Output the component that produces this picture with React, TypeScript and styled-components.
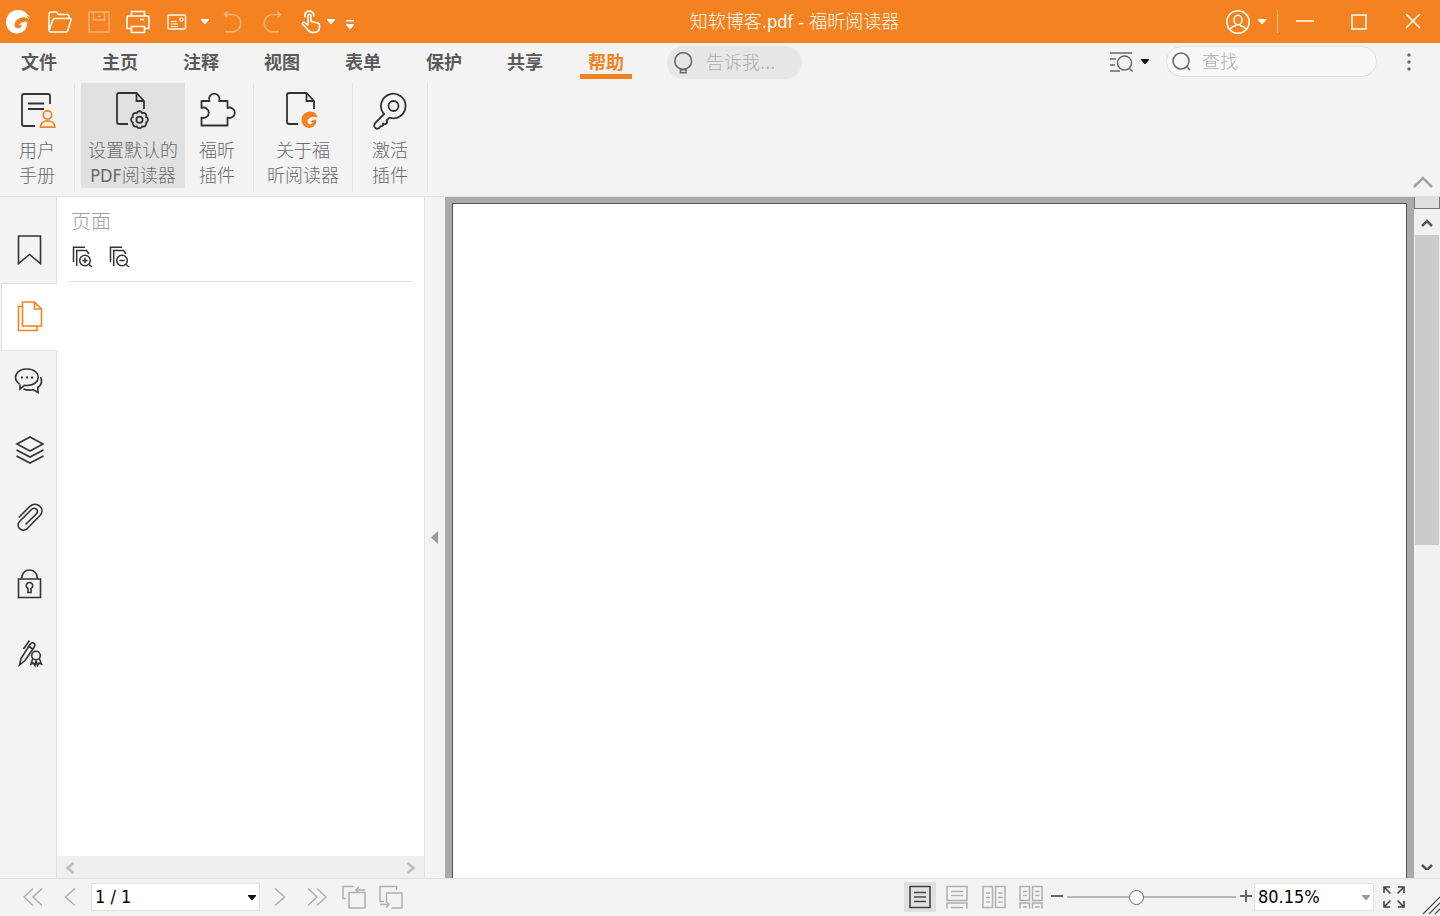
import React from "react";
import styled, { createGlobalStyle, css } from "styled-components";

const orange = "#f58220";
const fontStack =
  '"DejaVu Sans Condensed", "Noto Sans CJK SC", "Noto Sans", sans-serif';

const GlobalStyle = createGlobalStyle`
  *, *::before, *::after { box-sizing: border-box; }
  body {
    margin: 0;
    font-family: ${fontStack};
    font-size: 18px;
    font-weight: 300;
    color: #6a6a6a;
    background: #f3f3f3;
  }
  button, input, select { font: inherit; color: inherit; }
  svg { display: block; flex: none; }
`;

/* ---------- shared pieces ---------- */

const Window = styled.div`
  display: flex;
  flex-direction: column;
  height: 100vh;
  overflow: hidden;
`;

const PlainButton = styled.button`
  display: flex;
  align-items: center;
  justify-content: center;
  padding: 0;
  border: 0;
  background: transparent;
  cursor: pointer;
`;

type GlyphProps = {
  w: number;
  h: number;
  stroke?: number;
  children: React.ReactNode;
};

const Glyph = ({ w, h, stroke = 1.5, children }: GlyphProps) => (
  <svg
    width={w}
    height={h}
    viewBox={`0 0 ${w} ${h}`}
    fill="none"
    stroke="currentColor"
    strokeWidth={stroke}
    aria-hidden="true"
  >
    {children}
  </svg>
);

const Caret = ({ w = 8, h = 5 }: { w?: number; h?: number }) => (
  <svg width={w} height={h} viewBox="0 0 8 5" fill="currentColor" aria-hidden="true">
    <path d="M0 0H8V1L4.5 5H3.5L0 1Z" />
  </svg>
);

const FoxMark = () => (
  <path
    d="M21 3.500C18.500 1 15.500 0 12 0C5 0 0 5.500 0 12.200C0 18.800 5 23.500 10.800 23.500C17.500 23.500 21.600 18.500 21.200 11.500C18 11.500 14.500 12.600 12.800 15.200L16 15C15.300 17.200 13.800 18.300 11.800 18.300C9.200 18.300 8 16 8.800 13.200C10 9.200 14.500 7 19 7.400C20.800 7.600 22.200 8.600 23 10C22.800 8 21.600 6.400 19.500 5.600C21.300 5.600 22.800 6.400 23.800 7.600C23.400 5.800 22 4.400 19.500 3.800Z"
    fill="currentColor"
    stroke="none"
  />
);

/* ---------- title bar ---------- */

const TitleBar = styled.header`
  display: flex;
  align-items: center;
  flex: none;
  height: 43px;
  background: ${orange};
  color: #fff;
`;

const BarButton = styled(PlainButton)<{ $width: number; $dim?: boolean }>`
  width: ${(p) => p.$width}px;
  height: 42px;
  opacity: ${(p) => (p.$dim ? 0.4 : 1)};
`;

const DocTitle = styled.h1`
  flex: 1;
  margin: 0;
  font-size: 18px;
  font-weight: 300;
  line-height: 42px;
  text-align: center;
  white-space: nowrap;
`;

const BarDivider = styled.span`
  width: 1px;
  height: 23px;
  margin-left: 3px;
  background: #fbc08c;
`;

/* ---------- ribbon tabs ---------- */

const TabRow = styled.div`
  display: flex;
  align-items: flex-start;
  flex: none;
  height: 40px;
  padding: 3px 0 0 13px;
`;

const Tabs = styled.nav`
  display: flex;
  gap: 29px;
`;

const Tab = styled.a<{ $active?: boolean }>`
  width: 52px;
  height: 33px;
  padding-top: 4px;
  border-bottom: 5px solid ${(p) => (p.$active ? orange : "transparent")};
  color: ${(p) => (p.$active ? orange : "#5a5a5a")};
  font-weight: 700;
  line-height: 26px;
  text-align: center;
  text-decoration: none;
`;

const TellMe = styled.label`
  display: flex;
  align-items: center;
  gap: 13px;
  width: 135px;
  height: 33px;
  margin-left: 35px;
  padding-left: 7px;
  border-radius: 17px;
  background: #e7e7e7;
`;

const BareInput = styled.input`
  flex: 1;
  min-width: 0;
  height: 28px;
  padding: 0;
  border: 0;
  outline: 0;
  background: transparent;
  &::placeholder {
    color: #aeaeae;
    opacity: 1;
  }
`;

const TabTools = styled.div`
  display: flex;
  align-items: center;
  margin-left: auto;
`;

const FinderButton = styled(PlainButton)`
  gap: 7px;
  height: 31px;
  margin-right: 17px;
`;

const BlackInk = styled.span`
  color: #111;
`;

const SearchBox = styled.label`
  display: flex;
  align-items: center;
  gap: 10px;
  width: 211px;
  height: 31px;
  padding: 0 12px 0 5px;
  border: 1px solid #e0e0e0;
  border-radius: 16px;
  background: #f8f8f8;
`;

const MoreButton = styled(PlainButton)`
  width: 63px;
  height: 31px;
`;

/* ---------- ribbon ---------- */

const Ribbon = styled.section`
  display: flex;
  flex: none;
  height: 114px;
  border-bottom: 1px solid #e1e1e1;
`;

const RibbonGroup = styled.div<{ $pad?: string }>`
  display: flex;
  align-items: flex-start;
  height: 109px;
  padding: ${(p) => p.$pad ?? "0"};
  border-right: 1px solid #e3e3e3;
`;

const RibbonButton = styled(PlainButton)<{ $width: number; $on?: boolean }>`
  flex-direction: column;
  justify-content: flex-start;
  gap: 8px;
  width: ${(p) => p.$width}px;
  height: 105px;
  padding-top: 7px;
  background: ${(p) => (p.$on ? "#e1e1e1" : "transparent")};
  line-height: 25px;
  white-space: nowrap;
`;

const RibbonIcon = styled.span`
  color: #333;
`;

const CollapseButton = styled(PlainButton)`
  align-self: flex-end;
  width: 34px;
  height: 28px;
  margin-left: auto;
  color: #a3a3a3;
`;

/* ---------- workspace ---------- */

const Workspace = styled.main`
  display: flex;
  flex: 1;
  min-height: 0;
`;

const SideRail = styled.nav`
  flex: none;
  width: 57px;
  padding-top: 19px;
  border-right: 1px solid #e0e0e0;
`;

const RailButton = styled(PlainButton)<{ $active?: boolean }>`
  width: 56px;
  height: 67px;
  padding-left: 2px;
  color: #333;
  ${(p) =>
    p.$active &&
    css`
      margin-left: 1px;
      padding-left: 0;
      background: #fff;
      box-shadow: inset 1px 1px #e0e0e0, 0 1px #e0e0e0;
      color: ${orange};
    `}
`;

const PagePanel = styled.aside`
  display: flex;
  flex-direction: column;
  flex: none;
  width: 368px;
  border-right: 1px solid #e3e3e3;
  background: #fff;
`;

const PanelHead = styled.div`
  margin: 0 11px 0 12px;
  padding: 10px 2px 0;
  height: 85px;
  border-bottom: 1px solid #e1e1e1;
`;

const PanelTitle = styled.h2`
  margin: 0;
  color: #a0a0a0;
  font-size: 20px;
  font-weight: 300;
  line-height: 30px;
`;

const PanelTools = styled.div`
  display: flex;
  gap: 15px;
  padding: 9px 0 0 1px;
  color: #333;
`;

const HorizontalScroll = styled.div`
  display: flex;
  justify-content: space-between;
  height: 22px;
  margin-top: auto;
  background: #efefef;
  color: #bdbdbd;
`;

const ScrollArrow = styled(PlainButton)`
  width: 26px;
  height: 24px;
`;

const Splitter = styled(PlainButton)`
  width: 20px;
  color: #999;
`;

const DocumentArea = styled.section`
  display: flex;
  flex: 1;
  min-width: 0;
  padding: 6px 7px 0;
  background: #aaa;
`;

const Page = styled.article`
  flex: 1;
  border: 1px solid #555;
  border-bottom: 0;
  background: #fff;
`;

const VerticalScroll = styled.div`
  display: flex;
  flex-direction: column;
  flex: none;
  width: 26px;
  background: #f1f1f1;
  color: #555;
`;

const SplitHandle = styled.div`
  height: 12px;
  margin-bottom: 2px;
  border: 1px solid #777;
  border-top: 0;
  background: #e0e0e0;
`;

const ScrollTrack = styled.div`
  flex: 1;
  padding: 0 1px;
`;

const ScrollThumb = styled.div`
  height: 50%;
  background: #cbcbcb;
`;

/* ---------- status bar ---------- */

const StatusBar = styled.footer`
  display: flex;
  align-items: center;
  flex: none;
  height: 38px;
  padding: 0 0 2px 14px;
  border-top: 1px solid #e0e0e0;
  color: #b0b0b0;
`;

const StatusButton = styled(PlainButton)`
  width: 37px;
  height: 30px;
`;

const ComboWrap = styled.label<{ $width: number; $arrow: string }>`
  position: relative;
  width: ${(p) => p.$width}px;
  color: ${(p) => p.$arrow};
  svg {
    position: absolute;
    right: 4px;
    top: 12px;
    pointer-events: none;
  }
`;

const PageCombo = styled(ComboWrap)`
  margin: 0 1px 0 3px;
`;

const ComboSelect = styled.select`
  appearance: none;
  display: block;
  width: 100%;
  height: 28px;
  padding: 0 16px 0 3px;
  border: 1px solid #e3e3e3;
  border-radius: 0;
  outline: 0;
  background: #fff;
  color: #000;
  font-weight: 400;
`;

const ViewTools = styled.div`
  display: flex;
  align-items: center;
  margin-left: auto;
`;

const ViewModes = styled.div`
  display: flex;
  gap: 5px;
  margin-right: 2px;
`;

const ViewButton = styled(PlainButton)<{ $on?: boolean }>`
  width: 32px;
  height: 30px;
  background: ${(p) => (p.$on ? "#e0e0e0" : "transparent")};
  color: ${(p) => (p.$on ? "#444" : "#b0b0b0")};
`;

const StepButton = styled(PlainButton)`
  width: 16px;
  height: 30px;
  color: #666;
`;

const ZoomSlider = styled.input`
  appearance: none;
  width: 173px;
  height: 16px;
  margin: 0;
  padding: 0 2px;
  background: transparent;
  &::-webkit-slider-runnable-track {
    height: 2px;
    background: #b9b9b9;
  }
  &::-webkit-slider-thumb {
    appearance: none;
    width: 15px;
    height: 15px;
    margin-top: -6px;
    border: 1px solid #666;
    border-radius: 50%;
    background: #fff;
  }
`;

const FullScreenButton = styled(PlainButton)`
  width: 32px;
  height: 30px;
  margin: 0 12px 0 4px;
  color: #444;
`;

const ResizeGrip = styled.span`
  align-self: flex-end;
  margin-bottom: -2px;
  color: #444;
`;

/* ---------- icons ---------- */

const gearPath = (cx: number, cy: number, r: number, lobes: number) => {
  const point = (i: number) => {
    const a = ((i + 0.5) * 2 * Math.PI) / lobes;
    return `${(cx + r * Math.cos(a)).toFixed(2)} ${(cy + r * Math.sin(a)).toFixed(2)}`;
  };
  let d = `M${point(0)}`;
  for (let i = 1; i <= lobes; i++) d += `A3 3 0 0 1 ${point(i)}`;
  return d + "Z";
};

const DocOutline = () => (
  <path d="M15 34H6Q4 34 4 32V5Q4 3 6 3H23.500L31 11V19M23.500 3.500V11H31" />
);

const ribbonIcons = {
  manual: (
    <Glyph w={40} h={40} stroke={1.8}>
      <path d="M33 14V6Q33 4 31 4H7Q5 4 5 6V34Q5 36 7 36H18M11 13.500H27M11 19H27" />
      <g stroke={orange}>
        <circle cx="30.500" cy="25" r="4.200" />
        <path d="M23.500 37.200C23.500 28.800 37.800 28.800 37.800 37.200Z" />
      </g>
    </Glyph>
  ),
  reader: (
    <Glyph w={40} h={40} stroke={1.8}>
      <DocOutline />
      <path d={gearPath(26.5, 29.7, 7.2, 8)} />
      <circle cx="26.500" cy="29.700" r="3.100" />
    </Glyph>
  ),
  puzzle: (
    <Glyph w={40} h={40} stroke={1.8}>
      <path
        strokeLinejoin="round"
        d="M4.500 11H12.500A5.200 5.200 0 1 1 22 11H30.500V18A5.200 5.200 0 1 1 30.500 27.500V35.500H4.500V27.500A5.200 5.200 0 1 0 4.500 18Z"
      />
    </Glyph>
  ),
  about: (
    <Glyph w={40} h={40} stroke={1.8}>
      <DocOutline />
      <g transform="translate(18.500 21.500) scale(.7)" color={orange}>
        <FoxMark />
      </g>
    </Glyph>
  ),
  key: (
    <Glyph w={40} h={40} stroke={1.8}>
      <circle cx="23.500" cy="16" r="5" />
      <path
        strokeLinejoin="round"
        d="M13.300 23.200A12.300 12.300 0 1 1 19.500 27.700L16.500 30.500Q18 33 15.500 34.200Q14 34.500 13 33.500Q13.500 36 11 36.200L8.500 38.500Q5.500 39.500 4.300 36.500Q4 34.500 5.200 33L14.200 24Z"
      />
    </Glyph>
  ),
};

const railIcons: { label: string; icon: React.ReactNode }[] = [
  {
    label: "书签",
    icon: <path d="M5.500 2H27.500V29.500L16.500 20.500L5.500 29.500Z" />,
  },
  {
    label: "页面",
    icon: (
      <path d="M9.500 1H21.500L28.500 8V25H9.500ZM21.500 1V8H28.500M9.500 5.500H5.500V29.500H24V25" />
    ),
  },
  {
    label: "注释",
    icon: (
      <>
        <path d="M6.500 16C-1 10.500 3 1 14 1C29 1 29 17.500 14 17.500Q12.500 17.500 11.500 17.300L7 21V16.500M27.500 9Q30.500 15.500 24.800 19.500L25 24.500L20.500 21.800Q14.500 22.800 10.500 21" />
        <path d="M8 9.500H10M13 9.500H15M18 9.500H20" strokeWidth="2" />
      </>
    ),
  },
  {
    label: "图层",
    icon: (
      <path d="M4 9L17 2L30 9L17 16ZM3.500 15L17 22L30.500 15M3.500 21L17 28L30.500 21" />
    ),
  },
  {
    label: "附件",
    icon: (
      <path d="M5.700 15.500L17 4.300C23.500 -1.500 33 6.800 27 13.500L14.500 26.300C9 31.500 1.500 24.500 7 19L18.500 7.500C22.500 4.300 26.500 8.800 23 12.300L12.500 22.500" />
    ),
  },
  {
    label: "安全",
    icon: (
      <>
        <path d="M5.500 10H27.500V28.500H5.500ZM8.500 10C8.500 -2 24.500 -2 24.500 10" />
        <path d="M15 19.500A3.200 3.200 0 1 1 18 19.500V23.500H15Z" />
      </>
    ),
  },
  {
    label: "签名",
    icon: (
      <>
        <path d="M6.500 29L8 22.500L17 8.500Q19 5.500 21.300 7.500Q22.500 9 21 11.500L12 24.500ZM16 10.500L20.500 13.500M10.500 13L16.500 4.500" />
        <circle cx="23" cy="19.500" r="4.300" />
        <path d="M19.800 22.500L18 28L20.500 27L22 29.500L23 24.500L24.500 29.500L26 27L28.500 28L26.200 22.500" />
      </>
    ),
  },
];

const ThumbIcon = ({ plus }: { plus?: boolean }) => (
  <Glyph w={22} h={22} stroke={1.5}>
    <path d="M1.500 16V1.300H13M4.700 20V4.500H14.500L17 8" />
    <circle cx="13" cy="14.500" r="5.300" />
    <path d={plus ? "M10.300 14.500H15.700M13 11.800V17.200" : "M10.300 14.500H15.700"} />
    <path d="M17 18.500L20 21" />
  </Glyph>
);

type Action = { lines: [string, string]; icon: keyof typeof ribbonIcons; width: number; on?: boolean };

const ribbonGroups: { pad?: string; actions: Action[] }[] = [
  { actions: [{ lines: ["用户", "手册"], icon: "manual", width: 74 }] },
  {
    pad: "0 4px 0 6px",
    actions: [
      { lines: ["设置默认的", "PDF阅读器"], icon: "reader", width: 104, on: true },
      { lines: ["福昕", "插件"], icon: "puzzle", width: 64 },
    ],
  },
  { actions: [{ lines: ["关于福", "昕阅读器"], icon: "about", width: 98 }] },
  { actions: [{ lines: ["激活", "插件"], icon: "key", width: 74 }] },
];

const tabs = ["文件", "主页", "注释", "视图", "表单", "保护", "共享", "帮助"];

export default function App() {
  return (
    <>
      <GlobalStyle />
      <Window>
        <TitleBar>
          <BarButton $width={36} aria-label="福昕阅读器">
            <Glyph w={24} h={24}><FoxMark /></Glyph>
          </BarButton>
          <BarButton $width={48} aria-label="打开">
            <Glyph w={24} h={22}>
              <path d="M1 19V3Q1 1 3 1H8.500L10.500 3.500H19Q21 3.500 21 5.500V7.500M1.300 19L4.800 8.800Q5.200 7.500 6.500 7.500H22Q23.500 7.500 23 9L19.800 19.300Q19.300 21 18 21H3Q1 21 1 19Z" />
            </Glyph>
          </BarButton>
          <BarButton $width={29} $dim aria-label="保存">
            <Glyph w={22} h={22} stroke={1.4}>
              <path d="M1 1H21V21H1ZM5.500 1V9H16.500V1M10 5.500H12.500" />
            </Glyph>
          </BarButton>
          <BarButton $width={50} aria-label="打印">
            <Glyph w={24} h={24} stroke={1.6}>
              <path d="M5.500 6V1.500H18.500V6M5.500 18.500H1V7.500Q1 6 2.500 6H21.500Q23 6 23 7.500V18.500H18.500M5.500 16.500H18.500V22.500H5.500ZM14 9.500H18" />
            </Glyph>
          </BarButton>
          <BarButton $width={28} aria-label="电子邮件">
            <Glyph w={20} h={16} stroke={1.3}>
              <rect x="1" y="1" width="17.500" height="14" rx="1" />
              <path d="M4 7.500H9.500M4 10H11M4 12.500H11M13 4H16V7H13Z" strokeWidth="1" />
            </Glyph>
          </BarButton>
          <BarButton $width={28} aria-label="邮件选项"><Caret /></BarButton>
          <BarButton $width={28} $dim aria-label="撤销">
            <Glyph w={20} h={22}>
              <path d="M2 3.500H10A8.700 8.700 0 0 1 10 20.800H2M4.500 .5L1.500 3.500L4.500 6.500" />
            </Glyph>
          </BarButton>
          <BarButton $width={50} $dim aria-label="重做">
            <Glyph w={20} h={22}>
              <path d="M18 3.500H10A8.700 8.700 0 0 0 10 20.800H17M15.500 .5L18.500 3.500L15.500 6.500" />
            </Glyph>
          </BarButton>
          <BarButton $width={28} aria-label="手型工具">
            <Glyph w={20} h={24} stroke={1.6}>
              <path
                strokeLinejoin="round"
                d="M7 15.500V6Q7 4.300 8.500 4.300Q10 4.300 10 6V11.500L17 13Q18.500 13.500 18.500 15V17Q18.500 22.500 12.500 22.500Q8.500 22.500 7 20L1.500 14Q1 12.500 2.500 12.200Q4 12.200 7 15.500M4.500 7.500Q3 5.500 4.500 3Q6.500 .5 9.500 1.300Q13.500 2.500 12.700 6.500"
              />
            </Glyph>
          </BarButton>
          <BarButton $width={12} aria-label="手型工具选项"><Caret /></BarButton>
          <BarButton $width={26} aria-label="自定义快速访问工具栏">
            <Glyph w={10} h={16} stroke={0}>
              <path d="M1 6H9V7.500H1ZM1 10H9V11L5.500 15H4.500L1 11Z" fill="currentColor" />
            </Glyph>
          </BarButton>
          <DocTitle>知软博客.pdf - 福昕阅读器</DocTitle>
          <BarButton $width={24} aria-label="账户">
            <Glyph w={24} h={24}>
              <circle cx="12" cy="12" r="11.200" />
              <ellipse cx="12" cy="10" rx="4" ry="4.800" />
              <path d="M4 19.500Q5.500 16.500 9.500 15.800L10.500 14M20 19.500Q18.500 16.500 14.500 15.800L13.500 14" />
            </Glyph>
          </BarButton>
          <BarButton $width={24} aria-label="账户选项"><Caret /></BarButton>
          <BarDivider />
          <BarButton $width={54} aria-label="最小化">
            <Glyph w={18} h={16}><path d="M0 7H18" /></Glyph>
          </BarButton>
          <BarButton $width={54} aria-label="最大化">
            <Glyph w={16} h={16}><rect x="1" y="1" width="14" height="14" /></Glyph>
          </BarButton>
          <BarButton $width={54} aria-label="关闭">
            <Glyph w={16} h={16}><path d="M1 0L15 14M15 0L1 14" /></Glyph>
          </BarButton>
        </TitleBar>

        <TabRow>
          <Tabs>
            {tabs.map((name) => (
              <Tab key={name} href="#" $active={name === "帮助"}>{name}</Tab>
            ))}
          </Tabs>
          <TellMe>
            <Glyph w={19} h={24} stroke={1.6}>
              <circle cx="9.200" cy="10" r="8.400" />
              <path d="M6.500 17.800V21.800H12V17.800M6.500 18.800H12" />
            </Glyph>
            <BareInput placeholder="告诉我..." aria-label="告诉我" />
          </TellMe>
          <TabTools>
            <FinderButton aria-label="查找选项">
              <Glyph w={25} h={20}>
                <path d="M1 1H23M1 7H7M1 13H6M1 19H11M20.500 16.500L23.500 19.500" />
                <circle cx="15.500" cy="11" r="7" />
              </Glyph>
              <BlackInk><Caret w={8} h={5} /></BlackInk>
            </FinderButton>
            <SearchBox>
              <Glyph w={20} h={20} stroke={1.6}>
                <circle cx="9" cy="9" r="8" />
                <path d="M14.500 14.500L18 18" />
              </Glyph>
              <BareInput placeholder="查找" aria-label="查找" />
            </SearchBox>
            <MoreButton aria-label="更多">
              <Glyph w={4} h={18} stroke={0}>
                <g fill="currentColor">
                  <circle cx="2" cy="2" r="1.700" />
                  <circle cx="2" cy="9" r="1.700" />
                  <circle cx="2" cy="16" r="1.700" />
                </g>
              </Glyph>
            </MoreButton>
          </TabTools>
        </TabRow>

        <Ribbon>
          {ribbonGroups.map((group, i) => (
            <RibbonGroup key={i} $pad={group.pad}>
              {group.actions.map((a) => (
                <RibbonButton key={a.icon} $width={a.width} $on={a.on}>
                  <RibbonIcon>{ribbonIcons[a.icon]}</RibbonIcon>
                  <span>{a.lines[0]}<br />{a.lines[1]}</span>
                </RibbonButton>
              ))}
            </RibbonGroup>
          ))}
          <CollapseButton aria-label="折叠功能区">
            <Glyph w={20} h={12} stroke={2.5}><path d="M1 11L10 2L19 11" /></Glyph>
          </CollapseButton>
        </Ribbon>

        <Workspace>
          <SideRail>
            {railIcons.map((item) => (
              <RailButton key={item.label} aria-label={item.label} $active={item.label === "页面"}>
                <Glyph w={32} h={32} stroke={1.6}>{item.icon}</Glyph>
              </RailButton>
            ))}
          </SideRail>
          <PagePanel>
            <PanelHead>
              <PanelTitle>页面</PanelTitle>
              <PanelTools>
                <PlainButton aria-label="放大页面缩略图"><ThumbIcon plus /></PlainButton>
                <PlainButton aria-label="缩小页面缩略图"><ThumbIcon /></PlainButton>
              </PanelTools>
            </PanelHead>
            <HorizontalScroll>
              <ScrollArrow aria-label="向左滚动">
                <Glyph w={10} h={12} stroke={2.5}><path d="M8.500 1L2.500 6L8.500 11" /></Glyph>
              </ScrollArrow>
              <ScrollArrow aria-label="向右滚动">
                <Glyph w={10} h={12} stroke={2.5}><path d="M1.500 1L7.500 6L1.500 11" /></Glyph>
              </ScrollArrow>
            </HorizontalScroll>
          </PagePanel>
          <Splitter aria-label="折叠面板">
            <svg width="8" height="13" viewBox="0 0 8 13" fill="currentColor" aria-hidden="true">
              <path d="M7 0V13L0 6.500Z" />
            </svg>
          </Splitter>
          <DocumentArea><Page /></DocumentArea>
          <VerticalScroll>
            <SplitHandle />
            <ScrollArrow aria-label="向上滚动">
              <Glyph w={12} h={8} stroke={2.5}><path d="M1 7L6 2L11 7" /></Glyph>
            </ScrollArrow>
            <ScrollTrack><ScrollThumb /></ScrollTrack>
            <ScrollArrow aria-label="向下滚动">
              <Glyph w={12} h={8} stroke={2.5}><path d="M1 3L6 8L11 3" /></Glyph>
            </ScrollArrow>
          </VerticalScroll>
        </Workspace>

        <StatusBar>
          <StatusButton aria-label="第一页">
            <Glyph w={20} h={18}><path d="M10 .5L1 9L10 17.500M19 .5L10 9L19 17.500" /></Glyph>
          </StatusButton>
          <StatusButton aria-label="上一页">
            <Glyph w={12} h={18}><path d="M11 .5L1.500 9L11 17.500" /></Glyph>
          </StatusButton>
          <PageCombo $width={169} $arrow="#111">
            <ComboSelect aria-label="页码"><option>1 / 1</option></ComboSelect>
            <Caret />
          </PageCombo>
          <StatusButton aria-label="下一页">
            <Glyph w={12} h={18}><path d="M1 .5L10.500 9L1 17.500" /></Glyph>
          </StatusButton>
          <StatusButton aria-label="最后一页">
            <Glyph w={20} h={18}><path d="M1 .5L10 9L1 17.500M10 .5L19 9L10 17.500" /></Glyph>
          </StatusButton>
          <StatusButton aria-label="上一视图">
            <Glyph w={24} h={24}>
              <path d="M4 13.500H1V1.500H11.500M7 7.500H23V23H7ZM23 5H14M17 2L14 5L17 8" />
            </Glyph>
          </StatusButton>
          <StatusButton aria-label="下一视图">
            <Glyph w={24} h={24}>
              <path d="M5 16.500H1V1.500H17.500V5M7.500 16V8H23V23H12.500M1 19.500H10M7 16.500L10 19.500L7 22.500" />
            </Glyph>
          </StatusButton>
          <ViewTools>
            <ViewModes>
              <ViewButton $on aria-label="单页">
                <Glyph w={22} h={24} stroke={1.6}>
                  <path d="M1 1.500H21V22.500H1ZM5 7.500H17M5 12H17M5 16.500H17" />
                </Glyph>
              </ViewButton>
              <ViewButton aria-label="连续">
                <Glyph w={22} h={24}>
                  <path d="M1 1.500H21V15.500H1ZM5 6.500H17M5 10.500H17M1 23.500V18H21V23.500M5 22.500H17" />
                </Glyph>
              </ViewButton>
              <ViewButton aria-label="双页">
                <Glyph w={24} h={24}>
                  <path d="M1 1.500H10.500V22.500H1ZM13.500 1.500H23V22.500H13.500ZM4 8H8M4 12.500H8M4 17H8M16 8H20.500M16 12.500H20.500M16 17H20.500" />
                </Glyph>
              </ViewButton>
              <ViewButton aria-label="连续双页">
                <Glyph w={24} h={24}>
                  <path d="M1 1.500H10.500V15.500H1ZM13.500 1.500H23V15.500H13.500ZM4 6.500H8M4 10.500H8M16 6.500H20.500M16 10.500H20.500M1 23.500V18H10.500V23.500M13.500 23.500V18H23V23.500M4 22H8M16 22H20.500" />
                </Glyph>
              </ViewButton>
            </ViewModes>
            <StepButton aria-label="缩小">
              <Glyph w={12} h={12} stroke={2}><path d="M0 5H12" /></Glyph>
            </StepButton>
            <ZoomSlider type="range" min="0" max="100" defaultValue="40" aria-label="缩放" />
            <StepButton aria-label="放大">
              <Glyph w={12} h={14} stroke={2}><path d="M0 6H12M6 0V12" /></Glyph>
            </StepButton>
            <ComboWrap $width={120} $arrow="#999">
              <ComboSelect aria-label="缩放比例"><option>80.15%</option></ComboSelect>
              <Caret />
            </ComboWrap>
            <FullScreenButton aria-label="全屏">
              <Glyph w={22} h={22} stroke={1.6}>
                <path d="M1 7V1H7M1 1L7.500 7.500M15 1H21V7M21 1L14.500 7.500M1 15V21H7M1 21L7.500 14.500M15 21H21V15M21 21L14.500 14.500" />
              </Glyph>
            </FullScreenButton>
            <ResizeGrip>
              <Glyph w={18} h={18} stroke={1.2}>
                <path d="M1 18L18 1M7 18L18 7M13 18L18 13" />
              </Glyph>
            </ResizeGrip>
          </ViewTools>
        </StatusBar>
      </Window>
    </>
  );
}
